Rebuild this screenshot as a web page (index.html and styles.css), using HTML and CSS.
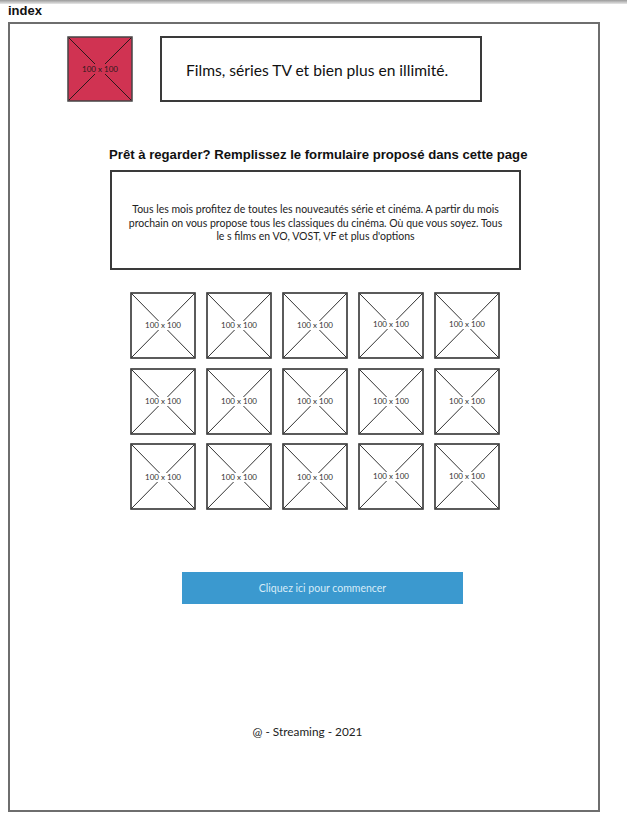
FILE: index.html
```html
<!DOCTYPE html>
<html lang="fr">
<head>
<meta charset="utf-8">
<title>index</title>
<link rel="stylesheet" href="styles.css">
</head>
<body>
<div class="topbar"></div>
<div class="pagename">index</div>
<div class="frame">
  <header class="header">
    <div class="logo">
      <svg width="66" height="66" viewBox="0 0 66 66">
        <rect x="1" y="1" width="64" height="64" fill="#d03352" stroke="#444" stroke-width="1.5"/>
        <line x1="2" y1="2" x2="64" y2="64" stroke="#2a1a1c" stroke-width="1"/>
        <line x1="64" y1="2" x2="2" y2="64" stroke="#2a1a1c" stroke-width="1"/>
        <rect x="15" y="28" width="36" height="10" fill="#d03352"/>
        <text x="33" y="36" text-anchor="middle" class="ph red">100 x 100</text>
      </svg>
    </div>
    <div class="tagline">Films, séries TV et bien plus en illimité.</div>
  </header>

  <h1 class="heading">Prêt à regarder? Remplissez le formulaire proposé dans cette page</h1>

  <div class="intro">
    <p>Tous les mois profitez de toutes les nouveautés série et cinéma. A partir du mois prochain on vous propose tous les classiques du cinéma. Où que vous soyez. Tous le s films en VO, VOST, VF et plus d'options</p>
  </div>

  <div class="grid">
    <svg class="thumb" viewBox="0 0 66 67"><rect x="1" y="1" width="64" height="65" fill="#fff" stroke="#333" stroke-width="1.6"/><line x1="2" y1="2" x2="64" y2="65" stroke="#333"/><line x1="64" y1="2" x2="2" y2="65" stroke="#333"/><rect x="15" y="29" width="36" height="9" fill="#fff"/><text x="33" y="36" text-anchor="middle" class="ph">100 x 100</text></svg>
    <svg class="thumb" viewBox="0 0 66 67"><rect x="1" y="1" width="64" height="65" fill="#fff" stroke="#333" stroke-width="1.6"/><line x1="2" y1="2" x2="64" y2="65" stroke="#333"/><line x1="64" y1="2" x2="2" y2="65" stroke="#333"/><rect x="15" y="29" width="36" height="9" fill="#fff"/><text x="33" y="36" text-anchor="middle" class="ph">100 x 100</text></svg>
    <svg class="thumb" viewBox="0 0 66 67"><rect x="1" y="1" width="64" height="65" fill="#fff" stroke="#333" stroke-width="1.6"/><line x1="2" y1="2" x2="64" y2="65" stroke="#333"/><line x1="64" y1="2" x2="2" y2="65" stroke="#333"/><rect x="15" y="29" width="36" height="9" fill="#fff"/><text x="33" y="36" text-anchor="middle" class="ph">100 x 100</text></svg>
    <svg class="thumb" viewBox="0 0 66 67"><rect x="1" y="1" width="64" height="65" fill="#fff" stroke="#333" stroke-width="1.6"/><line x1="2" y1="2" x2="64" y2="65" stroke="#333"/><line x1="64" y1="2" x2="2" y2="65" stroke="#333"/><rect x="15" y="28" width="36" height="9" fill="#fff"/><text x="33" y="35" text-anchor="middle" class="ph">100 x 100</text></svg>
    <svg class="thumb" viewBox="0 0 66 67"><rect x="1" y="1" width="64" height="65" fill="#fff" stroke="#333" stroke-width="1.6"/><line x1="2" y1="2" x2="64" y2="65" stroke="#333"/><line x1="64" y1="2" x2="2" y2="65" stroke="#333"/><rect x="15" y="28" width="36" height="9" fill="#fff"/><text x="33" y="35" text-anchor="middle" class="ph">100 x 100</text></svg>

    <svg class="thumb" viewBox="0 0 66 67"><rect x="1" y="1" width="64" height="65" fill="#fff" stroke="#333" stroke-width="1.6"/><line x1="2" y1="2" x2="64" y2="65" stroke="#333"/><line x1="64" y1="2" x2="2" y2="65" stroke="#333"/><rect x="15" y="29" width="36" height="9" fill="#fff"/><text x="33" y="36" text-anchor="middle" class="ph">100 x 100</text></svg>
    <svg class="thumb" viewBox="0 0 66 67"><rect x="1" y="1" width="64" height="65" fill="#fff" stroke="#333" stroke-width="1.6"/><line x1="2" y1="2" x2="64" y2="65" stroke="#333"/><line x1="64" y1="2" x2="2" y2="65" stroke="#333"/><rect x="15" y="29" width="36" height="9" fill="#fff"/><text x="33" y="36" text-anchor="middle" class="ph">100 x 100</text></svg>
    <svg class="thumb" viewBox="0 0 66 67"><rect x="1" y="1" width="64" height="65" fill="#fff" stroke="#333" stroke-width="1.6"/><line x1="2" y1="2" x2="64" y2="65" stroke="#333"/><line x1="64" y1="2" x2="2" y2="65" stroke="#333"/><rect x="15" y="29" width="36" height="9" fill="#fff"/><text x="33" y="36" text-anchor="middle" class="ph">100 x 100</text></svg>
    <svg class="thumb" viewBox="0 0 66 67"><rect x="1" y="1" width="64" height="65" fill="#fff" stroke="#333" stroke-width="1.6"/><line x1="2" y1="2" x2="64" y2="65" stroke="#333"/><line x1="64" y1="2" x2="2" y2="65" stroke="#333"/><rect x="15" y="29" width="36" height="9" fill="#fff"/><text x="33" y="36" text-anchor="middle" class="ph">100 x 100</text></svg>
    <svg class="thumb" viewBox="0 0 66 67"><rect x="1" y="1" width="64" height="65" fill="#fff" stroke="#333" stroke-width="1.6"/><line x1="2" y1="2" x2="64" y2="65" stroke="#333"/><line x1="64" y1="2" x2="2" y2="65" stroke="#333"/><rect x="15" y="29" width="36" height="9" fill="#fff"/><text x="33" y="36" text-anchor="middle" class="ph">100 x 100</text></svg>

    <svg class="thumb" viewBox="0 0 66 67"><rect x="1" y="1" width="64" height="65" fill="#fff" stroke="#333" stroke-width="1.6"/><line x1="2" y1="2" x2="64" y2="65" stroke="#333"/><line x1="64" y1="2" x2="2" y2="65" stroke="#333"/><rect x="15" y="30" width="36" height="9" fill="#fff"/><text x="33" y="37" text-anchor="middle" class="ph">100 x 100</text></svg>
    <svg class="thumb" viewBox="0 0 66 67"><rect x="1" y="1" width="64" height="65" fill="#fff" stroke="#333" stroke-width="1.6"/><line x1="2" y1="2" x2="64" y2="65" stroke="#333"/><line x1="64" y1="2" x2="2" y2="65" stroke="#333"/><rect x="15" y="30" width="36" height="9" fill="#fff"/><text x="33" y="37" text-anchor="middle" class="ph">100 x 100</text></svg>
    <svg class="thumb" viewBox="0 0 66 67"><rect x="1" y="1" width="64" height="65" fill="#fff" stroke="#333" stroke-width="1.6"/><line x1="2" y1="2" x2="64" y2="65" stroke="#333"/><line x1="64" y1="2" x2="2" y2="65" stroke="#333"/><rect x="15" y="30" width="36" height="9" fill="#fff"/><text x="33" y="37" text-anchor="middle" class="ph">100 x 100</text></svg>
    <svg class="thumb" viewBox="0 0 66 67"><rect x="1" y="1" width="64" height="65" fill="#fff" stroke="#333" stroke-width="1.6"/><line x1="2" y1="2" x2="64" y2="65" stroke="#333"/><line x1="64" y1="2" x2="2" y2="65" stroke="#333"/><rect x="15" y="29" width="36" height="9" fill="#fff"/><text x="33" y="36" text-anchor="middle" class="ph">100 x 100</text></svg>
    <svg class="thumb" viewBox="0 0 66 67"><rect x="1" y="1" width="64" height="65" fill="#fff" stroke="#333" stroke-width="1.6"/><line x1="2" y1="2" x2="64" y2="65" stroke="#333"/><line x1="64" y1="2" x2="2" y2="65" stroke="#333"/><rect x="15" y="29" width="36" height="9" fill="#fff"/><text x="33" y="36" text-anchor="middle" class="ph">100 x 100</text></svg>
  </div>

  <button class="cta" type="button">Cliquez ici pour commencer</button>

  <footer class="footer">@ - Streaming - 2021</footer>
</div>
</body>
</html>
```

FILE: styles.css
```css
* { box-sizing: border-box; }
html, body { margin: 0; padding: 0; background: #fff; }
body { font-family: Lato, "Open Sans", sans-serif; color: #222; }

.topbar {
  height: 4px;
  background: linear-gradient(#9a9a9a, #e8e8e8);
}
.pagename {
  font-family: "Liberation Sans", Arial, sans-serif;
  font-weight: bold;
  font-size: 13px;
  line-height: 14px;
  padding-left: 8px;
  height: 18px;
  color: #111;
}
.frame {
  margin-left: 8px;
  width: 592px;
  height: 790px;
  border: 2px solid #6e6e6e;
  display: flex;
  flex-direction: column;
  align-items: flex-start;
}
.header {
  display: flex;
  align-items: flex-start;
  gap: 27px;
  margin-top: 12px;
  padding-left: 57px;
}
.logo { width: 66px; height: 66px; }
.logo svg { display: block; }
.ph {
  font-family: Lato, sans-serif;
  font-size: 8px;
  fill: #333;
}
.ph.red { fill: #2a1a1c; }
.tagline {
  width: 322px;
  height: 66px;
  border: 2px solid #3a3a3a;
  display: flex;
  align-items: center;
  padding: 2px 0 0 24px;
  font-size: 15.6px;
  color: #111;
}
.heading {
  margin: 45px 0 0 99px;
  font-family: "Liberation Sans", Arial, sans-serif;
  font-weight: bold;
  font-size: 13.15px;
  line-height: 16px;
  color: #111;
}
.intro {
  margin: 7px 0 0 100px;
  width: 411px;
  height: 100px;
  border: 2px solid #3a3a3a;
  display: flex;
  align-items: center;
  justify-content: center;
  padding: 7px 14px 0;
}
.intro p {
  margin: 0;
  text-align: center;
  font-size: 10.5px;
  line-height: 13.5px;
  color: #222;
}
.grid {
  margin: 22px 0 0 120px;
  display: grid;
  grid-template-columns: repeat(5, 66px);
  grid-auto-rows: 67px;
  column-gap: 10px;
  row-gap: 8.5px;
}
.thumb { width: 66px; height: 67px; display: block; }
.cta {
  margin: 62px 0 0 172px;
  width: 281px;
  height: 32px;
  border: none;
  background: #3b99cf;
  color: #d7ecf8;
  font-family: Lato, sans-serif;
  font-size: 10.5px;
  padding: 0;
}
.footer {
  margin-top: 120px;
  align-self: stretch;
  text-align: center;
  padding-left: 7px;
  font-size: 11.8px;
  color: #222;
}
```
